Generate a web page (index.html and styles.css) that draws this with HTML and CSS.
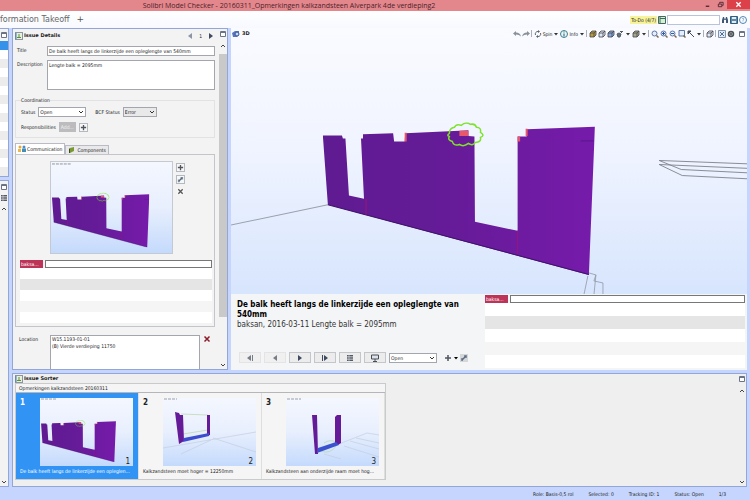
FILE: index.html
```
<!DOCTYPE html>
<html lang="nl">
    <head>
        <meta charset="utf-8">
        <title>Solibri Model Checker</title>
        <link rel="stylesheet" href="styles.css">
    </head>
    <body>
        <!-- shared drawings and icons -->
        <svg class="defs" aria-hidden="true">
            <defs>
                <linearGradient id="wallFill" x1="0" x2="1" y1="0" y2="0">
                    <stop offset="0" stop-color="#5f1b92"/>
                    <stop offset="0.45" stop-color="#651b97"/>
                    <stop offset="1" stop-color="#761bab"/>
                </linearGradient>
            </defs>
            <symbol id="wall" viewBox="323 123 271 152">
                <path fill="url(#wallFill)" d="M323 136h19l1 3h2.500l3.500 57 15 3-3-60h2v-4l30-1 1 8h10.500l.5-8 54-2.500 9-.5v5.500l6 .5.5 85 42.500 9V137h9v-7l68-2.500-6 147.500-260-70z"/>
                <path fill="none" stroke="#3f1268" d="M328 205l260 69.500"/>
                <path fill="none" stroke="#4d1580" stroke-width=".7" d="M580 141.500h13"/>
                <path fill="none" stroke="#9c1479" d="M366 199v16M517 231v23"/>
                <path fill="#e8586a" d="M459 131.500h9v5h-9zM404.500 133.500h2v8.500h-2zM525 129.500h2v7h-2zM517 137h2.500v5h-2.500z"/>
                <path fill="none" stroke="#7fe32c" stroke-width="1.500" d="M449 134q0-5 5-6q2-4 7-2q4-4 9-1q5-1 6 3q5 0 4 5q5 3 0 5q1 5-5 5q-3 4-7 1q-5 4-9 1q-6 2-7-3q-5-1-3-5q-3-1 0-3z"/>
            </symbol>
            <symbol id="i-panel" viewBox="0 0 8 8"><rect x=".5" y=".5" width="7" height="7" fill="#e8efda" stroke="#8b93a5"/><path d="M2 5.500h4M4 2v4" stroke="#5d8f3a"/><path d="M1 1v6" stroke="#477fc4"/></symbol>
            <symbol id="i-max" viewBox="0 0 8 8"><path d="M1.500 1.500h5v5h-5zM1.500 2.500h5" fill="#fff" stroke="#6a7486"/></symbol>
            <symbol id="i-left" viewBox="0 0 8 8"><path d="M6 1v6L2 4z"/></symbol>
            <symbol id="i-right" viewBox="0 0 8 8"><path d="M2 1v6l4-3z"/></symbol>
            <symbol id="i-first" viewBox="0 0 8 8"><path d="M5 1v6L1 4zM6 1h1v6H6z"/></symbol>
            <symbol id="i-last" viewBox="0 0 8 8"><path d="M3 1v6l4-3zM1 1h1v6H1z"/></symbol>
            <symbol id="i-caret" viewBox="0 0 6 8"><path d="M1 3h4L3 5.500z"/></symbol>
            <symbol id="i-up" viewBox="0 0 8 8"><path d="M2 5l2-2 2 2" fill="none" stroke="#444"/></symbol>
            <symbol id="i-down" viewBox="0 0 8 8"><path d="M2 3l2 2 2-2" fill="none" stroke="#444"/></symbol>
            <symbol id="i-plus" viewBox="0 0 8 8"><path d="M4 1v6M1 4h6" stroke="#52565c" stroke-width="1.500"/></symbol>
            <symbol id="i-cross" viewBox="0 0 8 8"><path d="M1.500 1.500l5 5M6.500 1.500l-5 5" stroke="currentColor" stroke-width="1.500"/></symbol>
            <symbol id="i-edit" viewBox="0 0 8 8"><path d="M1 7V4h2v3zM4 4V1h3v3z" fill="#8b919b"/><path d="M2 6l4-4" stroke="#566d8a" stroke-width="1.500"/></symbol>
            <symbol id="i-people" viewBox="0 0 8 8"><circle cx="2" cy="2" r="1.500" fill="#e2a83a"/><path d="M0 7V4h3v3z" fill="#e8b84c"/><circle cx="6" cy="2" r="1.500" fill="#4f8ac0"/><path d="M4 7V3.500h4V7z" fill="#3f8fb8"/></symbol>
            <symbol id="i-comp" viewBox="0 0 8 8"><path d="M2 2l4-1v4L2 7z" fill="#7a9a31"/><path d="M2 2v5H1V3z" fill="#37511a"/></symbol>
            <symbol id="i-undo" viewBox="0 0 8 8"><path d="M0 3.500L3 1v1.500q4 0 5 4Q6 4.500 3 4.500V6z" fill="#8b919b"/></symbol>
            <symbol id="i-redo" viewBox="0 0 8 8"><path d="M8 3.500L5 1v1.500q-4 0-5 4Q2 4.500 5 4.500V6z" fill="#8b919b"/></symbol>
            <symbol id="i-spin" viewBox="0 0 8 8"><path d="M1.500 5A2.500 2.500 0 0 1 4 1.500M6.500 3A2.500 2.500 0 0 1 4 6.500" fill="none" stroke="#59636f"/><path d="M4 0l2 1.500L4 3zM4 5L2 6.500 4 8z" fill="#59636f"/></symbol>
            <symbol id="i-info" viewBox="0 0 8 8"><circle cx="4" cy="4" r="3.500" fill="#e8f6f8" stroke="#417d8c"/><path d="M4 1.500v1M4 3.500v3" stroke="#225e75"/></symbol>
            <symbol id="i-cube" viewBox="0 0 8 8"><path d="M1 3l2-2h4v4L5 7H1zM1 3h4v4M5 3l2-2" fill="currentColor" stroke="#45424a" stroke-width=".8"/></symbol>
            <symbol id="i-tool" viewBox="0 0 8 8"><path d="M1 4l2-1 2 1-1 3H2zM5 3l2-2M4 1.500h2" fill="#6d747c" stroke="#555c66"/></symbol>
            <symbol id="i-zoom" viewBox="0 0 8 8"><circle cx="3.500" cy="3.500" r="2.500" fill="#e5eefc" stroke="#5d76a8"/><path d="M5.500 5.500l2 2" stroke="#7c6a50" stroke-width="1.500"/></symbol>
            <symbol id="i-zoomin" viewBox="0 0 8 8"><use href="#i-zoom"/><path d="M2 3.500h3M3.500 2v3" stroke="#2d5aa8"/></symbol>
            <symbol id="i-zoomout" viewBox="0 0 8 8"><use href="#i-zoom"/><path d="M2 3.500h3" stroke="#2d5aa8"/></symbol>
            <symbol id="i-zoomfit" viewBox="0 0 8 8"><path d="M1 .5h5.500v5.500H1z" fill="#e5eefc" stroke="#5d76a8"/><path d="M5.500 5.500l2 2" stroke="#7c6a50" stroke-width="1.500"/></symbol>
            <symbol id="i-walk" viewBox="0 0 8 8"><path d="M1 1h3L1 4zM2 2l5 5" fill="#444b58" stroke="#444b58"/></symbol>
            <symbol id="i-expand" viewBox="0 0 8 8"><path d="M.5.5h7v7h-7z" fill="#e2ebf3" stroke="#7d92ad"/><path d="M2 2l4 4M6 2L2 6" stroke="#55708f"/></symbol>
            <symbol id="i-gear" viewBox="0 0 8 8"><circle cx="4" cy="4" r="2.500" fill="#b4b7b9" stroke="#4d5257" stroke-width="1.500"/><circle cx="4" cy="4" r="1" fill="#4d5257"/></symbol>
            <symbol id="i-list" viewBox="0 0 8 8"><path d="M1 1h6v6H1z" fill="#555b66"/><path d="M1 2.500h6M1 4h6M1 5.500h6M3 1v6" stroke="#d7dade" stroke-width=".6"/></symbol>
            <symbol id="i-screen" viewBox="0 0 8 8"><path d="M.5 1h7v4h-7zM4 5v2M2 7.500h4" fill="#dde2e8" stroke="#474d57"/></symbol>
            <symbol id="i-todo" viewBox="0 0 8 8"><path d="M.5.5h7v7h-7z" fill="#d9efd4" stroke="#42695e"/><path d="M2 1v6M2 2.500h5" stroke="#37705c"/></symbol>
            <symbol id="i-find" viewBox="0 0 8 8"><path d="M1 7V4l1-3h1l1 3 1-3h1l1 3v3H5V4H3v3z" fill="#3f5878"/></symbol>
            <symbol id="i-save" viewBox="0 0 8 8"><path d="M.5.5h7v7h-7z" fill="#6189a9" stroke="#345c7c"/><path d="M2 1h4v2H2zM2 5h4v2H2z" fill="#e1edf5"/></symbol>
            <symbol id="i-3d" viewBox="0 0 8 8"><path d="M0 3l3-2h4v4L5 7H1z" fill="#5877ba"/><circle cx="5" cy="4" r="2" fill="#c9d8f4" stroke="#35549d"/></symbol>
        </svg>

        <header class="titlebar">
            <h1>Solibri Model Checker - 20160311_Opmerkingen kalkzandsteen Alverpark 4de verdieping2</h1>
            <div class="window-buttons">
                <button type="button" aria-label="Minimize"><svg viewBox="0 0 8 8"><path d="M2 6h4" stroke="#4c2430" stroke-width="1.500"/></svg></button>
                <button type="button" aria-label="Restore"><svg viewBox="0 0 8 8"><path d="M1.500 3.500h4v3h-4zM3 3V1.500h4V5H6" fill="none" stroke="#4c2430"/></svg></button>
                <button type="button" class="close" aria-label="Close"><svg viewBox="0 0 8 8"><use href="#i-cross"/></svg></button>
            </div>
        </header>

        <nav class="tabs-bar">
            <a href="#takeoff" class="layout-tab">formation Takeoff</a>
            <button type="button" class="add-tab">+</button>
            <form class="search">
                <label for="search">To-Do (4/7)</label>
                <svg class="icon"><use href="#i-todo"/></svg>
                <input id="search" type="text">
                <button type="button" aria-label="Find"><svg class="icon"><use href="#i-find"/></svg></button>
                <button type="button" aria-label="Save"><svg class="icon"><use href="#i-save"/></svg></button>
                <button type="button" class="help">?</button>
            </form>
        </nav>

        <main class="workspace">
            <aside class="side">
                <section class="panel side-top">
                    <svg class="icon"><use href="#i-max"/></svg>
                    <div class="side-row selected"></div>
                    <div class="stripes"></div>
                </section>
                <section class="panel side-bottom">
                    <svg class="icon"><use href="#i-max"/></svg>
                    <svg class="icon"><use href="#i-list"/></svg>
                    <svg class="icon"><use href="#i-up"/></svg>
                    <svg class="icon end"><use href="#i-down"/></svg>
                </section>
            </aside>

            <section class="panel details">
                <div class="details-main">
                    <div class="panel-head">
                        <svg class="icon"><use href="#i-panel"/></svg>
                        <h2>Issue Details</h2>
                        <div class="pager">
                            <button type="button" aria-label="Previous"><svg class="icon muted"><use href="#i-left"/></svg></button>
                            <span>1</span>
                            <button type="button" aria-label="Next"><svg class="icon"><use href="#i-right"/></svg></button>
                        </div>
                    </div>
                    <div class="field">
                        <label for="title">Title</label>
                        <input id="title" type="text" value="De balk heeft langs de linkerzijde een opleglengte van 540mm">
                    </div>
                    <div class="field">
                        <label for="description">Description</label>
                        <textarea id="description">Lengte balk = 2095mm</textarea>
                    </div>
                    <fieldset>
                        <legend>Coordination</legend>
                        <div class="field-line">
                            <label for="status">Status</label>
                            <select id="status"><option>Open</option></select>
                            <label for="bcf" class="second">BCF Status</label>
                            <select id="bcf" class="short"><option>Error</option></select>
                        </div>
                        <div class="field-line">
                            <span>Responsibilities</span>
                            <button type="button" class="add" disabled>Add...</button>
                            <button type="button" class="small-button" aria-label="Add responsibility"><svg class="icon"><use href="#i-plus"/></svg></button>
                        </div>
                    </fieldset>
                    <div class="tabs">
                        <button type="button" class="tab active"><svg class="icon"><use href="#i-people"/></svg>Communication</button>
                        <button type="button" class="tab"><svg class="icon"><use href="#i-comp"/></svg>Components</button>
                    </div>
                    <div class="tab-body">
                        <div class="snapshot">
                            <div class="picture">
                                <svg viewBox="0 0 123 93">
                                    <path d="M1 2h20" stroke="#8e9299" stroke-dasharray="3 1"/>
                                    <use href="#wall" x="1" y="31" width="99" height="56"/>
                                </svg>
                            </div>
                            <div class="snapshot-tools">
                                <button type="button" class="small-button" aria-label="Add snapshot"><svg class="icon"><use href="#i-plus"/></svg></button>
                                <button type="button" class="small-button" aria-label="Edit snapshot"><svg class="icon"><use href="#i-edit"/></svg></button>
                                <button type="button" class="small-button plain" aria-label="Remove snapshot"><svg class="icon"><use href="#i-cross"/></svg></button>
                            </div>
                        </div>
                        <div class="comment">
                            <label for="comment1">baksa...</label>
                            <input id="comment1" type="text">
                        </div>
                        <div class="comment-rows"><div></div><div class="dark"></div><div></div><div class="light"></div><div></div></div>
                    </div>
                    <div class="location">
                        <label for="location">Location</label>
                        <textarea id="location">W15.1193-01-01
(B) Vierde verdieping 11750</textarea>
                        <button type="button" aria-label="Remove location"><svg class="icon"><use href="#i-cross"/></svg></button>
                    </div>
                </div>
                <div class="scrollbar">
                    <svg class="icon"><use href="#i-max"/></svg>
                    <svg class="icon"><use href="#i-up"/></svg>
                    <div class="thumb"></div>
                    <svg class="icon"><use href="#i-down"/></svg>
                </div>
            </section>

            <section class="viewer">
                <div class="viewer-head">
                    <svg class="icon"><use href="#i-3d"/></svg>
                    <h2>3D</h2>
                    <div class="tools">
                        <svg class="icon"><use href="#i-undo"/></svg>
                        <svg class="icon"><use href="#i-redo"/></svg>
                        <i></i>
                        <button type="button"><svg class="icon"><use href="#i-spin"/></svg>Spin<svg class="caret"><use href="#i-caret"/></svg></button>
                        <button type="button"><svg class="icon"><use href="#i-info"/></svg>Info<svg class="caret"><use href="#i-caret"/></svg></button>
                        <i></i>
                        <svg class="icon gold"><use href="#i-cube"/></svg>
                        <svg class="icon pale"><use href="#i-cube"/></svg>
                        <svg class="icon blue"><use href="#i-cube"/></svg>
                        <button type="button" aria-label="Tools"><svg class="icon"><use href="#i-tool"/></svg><svg class="caret"><use href="#i-caret"/></svg></button>
                        <button type="button" class="olive" aria-label="Shading"><svg class="icon"><use href="#i-cube"/></svg><svg class="caret"><use href="#i-caret"/></svg></button>
                        <i></i>
                        <svg class="icon"><use href="#i-zoom"/></svg>
                        <svg class="icon"><use href="#i-zoomin"/></svg>
                        <svg class="icon"><use href="#i-zoomout"/></svg>
                        <svg class="icon"><use href="#i-zoomfit"/></svg>
                        <button type="button" aria-label="Walk"><svg class="icon"><use href="#i-walk"/></svg><svg class="caret"><use href="#i-caret"/></svg></button>
                        <i></i>
                        <svg class="icon pale"><use href="#i-cube"/></svg>
                        <i></i>
                        <svg class="icon"><use href="#i-expand"/></svg>
                        <svg class="icon"><use href="#i-gear"/></svg>
                        <svg class="icon"><use href="#i-max"/></svg>
                    </div>
                </div>
                <div class="scene">
                    <svg viewBox="230 40 517 254" preserveAspectRatio="xMidYMid slice">
                        <path d="M228 226l100-21" fill="none" stroke="#9aa1ad"/>
                        <path d="M588 273l7 2-2 6 9 2v12M587 276l-4 19M595 275l-2 20" fill="none" stroke="#9198a5" stroke-width=".8"/>
                        <path d="M750 164.500l-92-3.500 22 9 70 3.500M750 169l-92-4 23 11 70 3.500" fill="none" stroke="#7d828d" stroke-width=".9"/>
                        <use href="#wall" x="323" y="123" width="271" height="152"/>
                    </svg>
                </div>
                <div class="presentation">
                    <div class="slide">
                        <h3>De balk heeft langs de linkerzijde een opleglengte van 540mm</h3>
                        <p>baksan, 2016-03-11 Lengte balk = 2095mm</p>
                        <div class="controls">
                            <button type="button" aria-label="First" disabled><svg class="icon"><use href="#i-first"/></svg></button>
                            <button type="button" aria-label="Back" disabled><svg class="icon"><use href="#i-left"/></svg></button>
                            <button type="button" aria-label="Forward"><svg class="icon"><use href="#i-right"/></svg></button>
                            <button type="button" aria-label="Last"><svg class="icon"><use href="#i-last"/></svg></button>
                            <button type="button" aria-label="List"><svg class="icon"><use href="#i-list"/></svg></button>
                            <button type="button" aria-label="Present"><svg class="icon"><use href="#i-screen"/></svg></button>
                            <select aria-label="Slide status"><option>Open</option></select>
                            <div class="extra">
                                <svg class="icon"><use href="#i-plus"/></svg>
                                <svg class="caret"><use href="#i-caret"/></svg>
                                <svg class="icon boxed"><use href="#i-edit"/></svg>
                            </div>
                        </div>
                    </div>
                    <div class="slide-comments">
                        <div class="comment">
                            <label for="comment2">baksa...</label>
                            <input id="comment2" type="text">
                        </div>
                        <div class="comment-rows"><div></div><div class="dark"></div><div></div><div class="light"></div><div></div></div>
                    </div>
                </div>
            </section>

            <section class="panel sorter">
                <div class="sorter-main">
                    <div class="panel-head">
                        <svg class="icon"><use href="#i-panel"/></svg>
                        <h2>Issue Sorter</h2>
                    </div>
                    <div class="issues">
                        <div class="issues-title">Opmerkingen kalkzandsteen 20160311</div>
                        <article class="issue selected">
                            <b>1</b>
                            <div class="picture">
                                <svg viewBox="0 0 93 68">
                                    <path d="M1 1h15" stroke="#9b9fa6" stroke-dasharray="3 1"/>
                                    <use href="#wall" x="1" y="22" width="75" height="42"/>
                                </svg>
                                <span>1</span>
                            </div>
                            <p>De balk heeft langs de linkerzijde een opleglen...</p>
                        </article>
                        <article class="issue">
                            <b>2</b>
                            <div class="picture">
                                <svg viewBox="0 0 93 68">
                                    <path d="M1 1h13" stroke="#9b9fa6" stroke-dasharray="3 1"/>
                                    <path d="M0 50l93-16M50 40l43 14M48 42L18 56" fill="none" stroke="#c3cfdf" stroke-width=".7"/>
                                    <path d="M18 16l27 1M20 36l25-4v5l-25 4" fill="none" stroke="#b9d6aa" stroke-width=".7"/>
                                    <path d="M12 14l4 1 1 2h3l1 26-5 3zM44 17h3v20l-3 1z" fill="#651b97"/>
                                    <path d="M21 40l25-5v3l-26 6z" fill="#3b4ccc"/>
                                </svg>
                                <span>2</span>
                            </div>
                            <p>Kalkzandsteen moet hoger = 12250mm</p>
                        </article>
                        <article class="issue">
                            <b>3</b>
                            <div class="picture">
                                <svg viewBox="0 0 93 68">
                                    <path d="M1 1h14" stroke="#9b9fa6" stroke-dasharray="3 1"/>
                                    <path d="M53 46l28-11 12 2M58 48l35 11M70 40l23 5M64 43l29 8M38 56l17 5" fill="none" stroke="#c3cfdf" stroke-width=".7"/>
                                    <path d="M38 45q6-4 12-1M35 53q9 4 16-6" fill="none" stroke="#b9d6aa" stroke-width=".7"/>
                                    <path d="M26 17h5l1 39h-3zM49 19l2-2h4v28l-3 2-3-2z" fill="#651b97"/>
                                    <path d="M32 50l18-6 3 3-22 8z" fill="#3b52cf"/>
                                </svg>
                                <span>3</span>
                            </div>
                            <p>Kalkzandsteen aan onderzijde raam moet hog...</p>
                        </article>
                    </div>
                </div>
                <div class="scrollbar">
                    <svg class="icon"><use href="#i-max"/></svg>
                    <svg class="icon"><use href="#i-up"/></svg>
                    <div class="track"></div>
                    <svg class="icon"><use href="#i-down"/></svg>
                </div>
            </section>
        </main>

        <footer class="statusbar">
            <span>Role: Basis-0,5 rol</span>
            <span>Selected: 0</span>
            <span>Tracking ID: 1</span>
            <span>Status: Open</span>
            <span>1/3</span>
        </footer>
    </body>
</html>
```

FILE: styles.css
```
* {
    box-sizing: border-box;
}
body {
    margin: 0;
    height: 100vh;
    display: flex;
    flex-direction: column;
    overflow: hidden;
    background: #c5d5fd;
    color: #222;
    font-family: "DejaVu Sans Condensed", "DejaVu Sans", sans-serif;
    font-size: 5px;
    line-height: 8px;
}
h1, h2, h3, p, fieldset, article {
    margin: 0;
}
button, input, select, textarea {
    margin: 0;
    padding: 0;
    font: inherit;
    color: inherit;
    border-radius: 0;
}
button {
    display: flex;
    align-items: center;
    justify-content: center;
    border: 0;
    background: none;
}
input, textarea, select {
    border: 1px solid #a3a7ad;
    background: #fff;
    padding: 0 1px;
    min-width: 0;
}
input, select {
    height: 10px;
}
textarea {
    resize: none;
    overflow: hidden;
    display: block;
}
select {
    appearance: none;
    width: 48px;
    background: #fff url("data:image/svg+xml,%3Csvg xmlns='http://www.w3.org/2000/svg' width='8' height='8'%3E%3Cpath d='M2 3l2 2 2-2' fill='none' stroke='%23333'/%3E%3C/svg%3E") no-repeat right center;
}
svg {
    display: block;
}
.defs {
    position: absolute;
    width: 0;
    height: 0;
}
.icon {
    width: 8px;
    height: 8px;
    flex: none;
    fill: #3f4a60;
}
.muted {
    fill: #8d95a5;
}
.caret {
    width: 6px;
    height: 8px;
    flex: none;
}

/* window frame */
.titlebar {
    position: relative;
    height: 11px;
    flex: none;
    background: #e4878c;
}
.titlebar h1 {
    padding-right: 172px;
    text-align: center;
    font: 7px/11px "Open Sans", sans-serif;
    color: #4b2229;
}
.window-buttons {
    position: absolute;
    top: 0;
    right: 0;
    display: flex;
}
.window-buttons button {
    width: 13px;
    height: 9px;
}
.window-buttons svg {
    width: 7px;
    height: 7px;
}
.window-buttons .close {
    width: 23px;
    background: #dc4048;
    color: #fff;
}
.tabs-bar {
    height: 17px;
    flex: none;
    display: flex;
    align-items: center;
    padding-right: 3px;
    background: linear-gradient(#fff, #f7f9ff);
}
.layout-tab {
    white-space: nowrap;
    text-decoration: none;
    font: 8px/17px "DejaVu Sans", sans-serif;
    color: #666;
}
.add-tab {
    margin-left: 7px;
    font: 9px/17px "DejaVu Sans", sans-serif;
    color: #555;
}
.search {
    display: flex;
    align-items: center;
    gap: 1px;
    margin-left: auto;
}
.search label {
    padding: 0 1px;
    background: #f6f39a;
}
.search input {
    width: 53px;
    border-color: #b9c3dc;
}
.search .help {
    width: 8px;
    height: 8px;
    border: 1px solid #4f86b5;
    border-radius: 50%;
    color: #27659a;
}

/* workspace */
.workspace {
    flex: 1;
    min-height: 0;
    display: grid;
    grid-template-columns: 9px 216px minmax(0, 1fr);
    grid-template-rows: minmax(0, 1fr) 114px;
    gap: 3px;
    padding-right: 3px;
}
.panel {
    border: 1px solid #93a6d8;
    background: #f3f3f4;
}
.panel-head {
    display: flex;
    align-items: center;
    gap: 1px;
}
h2 {
    font-family: "DejaVu Sans", sans-serif;
    font-size: 5px;
    line-height: 9px;
}
.side {
    grid-row: span 2;
    display: flex;
    flex-direction: column;
    gap: 3px;
}
.side .panel {
    border-left: 0;
    padding-top: 2px;
}
.side-top {
    height: 149px;
    display: flex;
    flex-direction: column;
}
.side-row {
    height: 9px;
    margin-top: 2px;
}
.side-row.selected {
    background: #3592e8;
}
.stripes {
    flex: 1;
    background: repeating-linear-gradient(#fff 0 9px, #ececec 9px 18px);
}
.side-bottom {
    flex: 1;
    display: flex;
    flex-direction: column;
    gap: 3px;
}
.side-bottom .end {
    margin-top: auto;
}
.scrollbar {
    width: 8px;
    flex: none;
    display: flex;
    flex-direction: column;
    gap: 4px;
    padding-top: 1px;
}
.scrollbar .thumb {
    flex: 1;
    margin-bottom: 40px;
    background: #c9c9ca;
}
.scrollbar .track {
    flex: 1;
}

/* issue details */
.details {
    display: flex;
    min-height: 0;
}
.details-main {
    flex: 1;
    min-width: 0;
    display: flex;
    flex-direction: column;
    overflow: hidden;
    padding: 2px 4px 0 2px;
}
.pager {
    display: flex;
    align-items: center;
    gap: 5px;
    margin: 0 0 0 auto;
}
.field {
    display: flex;
    margin-left: 2px;
}
.field label {
    width: 30px;
    flex: none;
}
.field input, .field textarea {
    flex: 1;
}
.field input {
    margin: 6px 0 4px;
}
.field:nth-child(2) label {
    margin-top: 6px;
}
.field textarea {
    height: 30px;
}
fieldset {
    margin-top: 6px;
    border: 1px solid #e2e2e4;
    padding: 3px 5px 5px;
}
legend {
    padding: 0;
}
.field-line {
    display: flex;
    align-items: center;
    gap: 3px;
}
.field-line + .field-line {
    margin-top: 5px;
}
.field-line .second {
    margin-left: 6px;
}
.field-line .short {
    width: 34px;
    background-color: #e9e9ea;
}
.add {
    width: 17px;
    height: 10px;
    background: #bcbcbe;
    color: #f4f4f4;
}
.small-button {
    width: 9px;
    height: 9px;
    border: 1px solid #b4b8bf;
    background: #f7f7f7;
    color: #555;
}
.small-button .icon {
    width: 7px;
    height: 7px;
}
.small-button.plain {
    border-color: #f3f3f4;
}
.tabs {
    display: flex;
    align-items: flex-end;
    margin-top: 5px;
}
.tab {
    height: 9px;
    gap: 1px;
    padding: 0 2px;
    border: 1px solid #b9bcc5;
    border-bottom: 0;
    background: #e9e9eb;
}
.tab.active {
    height: 11px;
    background: #fff;
}
.tab-body {
    border: 1px solid #c3c5cb;
    padding: 6px 2px 3px 4px;
}
.snapshot {
    display: flex;
    justify-content: center;
    gap: 3px;
    margin-left: 2px;
}
.picture {
    position: relative;
    background: linear-gradient(#f4f7ff, #e8effd 50%, #c4dafc);
}
.picture svg {
    width: 100%;
}
.snapshot .picture {
    width: 123px;
    border: 1px solid #c5c9d2;
}
.snapshot-tools {
    display: flex;
    flex-direction: column;
    gap: 3px;
    padding-top: 2px;
}
.comment {
    display: flex;
    gap: 2px;
    height: 8px;
}
.tab-body .comment {
    margin-top: 6px;
}
.comment label {
    width: 23px;
    padding-left: 1px;
    background: #bd3459;
    color: #fff;
}
.comment input {
    flex: 1;
    height: 8px;
    border-color: #777;
}
.comment-rows {
    display: flex;
    flex-direction: column;
}
.comment-rows div {
    height: 11px;
    background: #fff;
}
.comment-rows .dark {
    background: #e5e5e5;
}
.comment-rows .light {
    background: #f5f5f5;
}
.location {
    flex: 1;
    min-height: 30px;
    display: flex;
    align-items: flex-start;
    margin: 8px 0 0 4px;
}
.location label {
    width: 31px;
}
.location textarea {
    width: 150px;
    height: 100%;
    border-bottom: 0;
    line-height: 7px;
}
.location button {
    margin-left: 3px;
    color: #8d1c28;
}

/* 3D view */
.viewer {
    display: flex;
    flex-direction: column;
    min-height: 0;
    background: linear-gradient(#fafbff, #f0f4ff 35%, #d7e5fd 78%);
}
.viewer-head {
    display: flex;
    align-items: center;
    gap: 2px;
    height: 11px;
    padding-left: 1px;
}
.tools {
    display: flex;
    align-items: center;
    gap: 1px;
    margin-left: auto;
}
.tools button {
    gap: 1px;
    fill: #333;
}
.tools i {
    width: 1px;
    height: 7px;
    margin-right: 1px;
    background: #a8afbd;
}
.tools > .icon:last-child {
    margin: 0 1px 0 2px;
}
.gold {
    color: #b99b3d;
}
.pale {
    color: #dde8f5;
}
.blue {
    color: #88a9da;
}
.tools .olive {
    color: #a8a98c;
}
.scene {
    flex: 1;
    min-height: 0;
}
.scene svg {
    width: 100%;
    height: 100%;
}
.presentation {
    display: flex;
    height: 76px;
    flex: none;
    background: #f4f5f6;
}
.slide {
    flex: 1;
    padding: 6px 8px 0 6px;
    color: #333;
}
.slide h3, .slide p {
    font-size: 8px;
    line-height: 10px;
}
.slide h3 {
    color: #000;
}
.controls {
    display: flex;
    align-items: center;
    gap: 3px;
    margin-top: 22px;
    padding-left: 2px;
}
.controls button {
    width: 22px;
    height: 11px;
    border: 1px solid #c5c6ca;
    background: #ececed;
}
.controls button:disabled {
    border-color: #e4e4e6;
    background: #f0f0f1;
}
.controls button:disabled .icon {
    fill: #777d88;
}
.extra {
    display: flex;
    align-items: center;
    margin-left: 4px;
    gap: 1px;
}
.boxed {
    background: #d6d7d9;
}
.slide-comments {
    width: 262px;
    padding: 1px 2px 0 0;
}
.slide-comments .comment-rows div {
    height: 13px;
}

/* issue sorter */
.sorter {
    grid-column: span 2;
    display: flex;
    background: #efefef;
}
.sorter-main {
    flex: 1;
    padding: 0 2px;
}
.issues {
    display: grid;
    grid-template-columns: repeat(3, 123px);
    width: 371px;
    border: 1px solid #c9cacc;
    background: #f5f5f5;
}
.issues-title {
    grid-column: span 3;
    padding-left: 3px;
    border-bottom: 1px solid #b5b6b9;
}
.issue {
    display: grid;
    grid-template-columns: 20px 93px;
    grid-template-rows: 68px 11px;
    padding: 5px 5px 2px 4px;
    border-right: 1px solid #dedede;
}
.issue b {
    font-size: 8px;
    line-height: 10px;
}
.issue p {
    grid-column: span 2;
    line-height: 11px;
    white-space: nowrap;
}
.issue .picture span {
    position: absolute;
    right: 3px;
    bottom: 0;
    font-size: 8px;
    line-height: 9px;
}
.issue.selected {
    background: #3194f5;
    color: #fff;
}
.issue.selected .picture span {
    color: #222;
}

.statusbar {
    height: 13px;
    flex: none;
    display: flex;
    align-items: center;
    justify-content: flex-end;
    gap: 15px;
    padding-right: 24px;
}
```
